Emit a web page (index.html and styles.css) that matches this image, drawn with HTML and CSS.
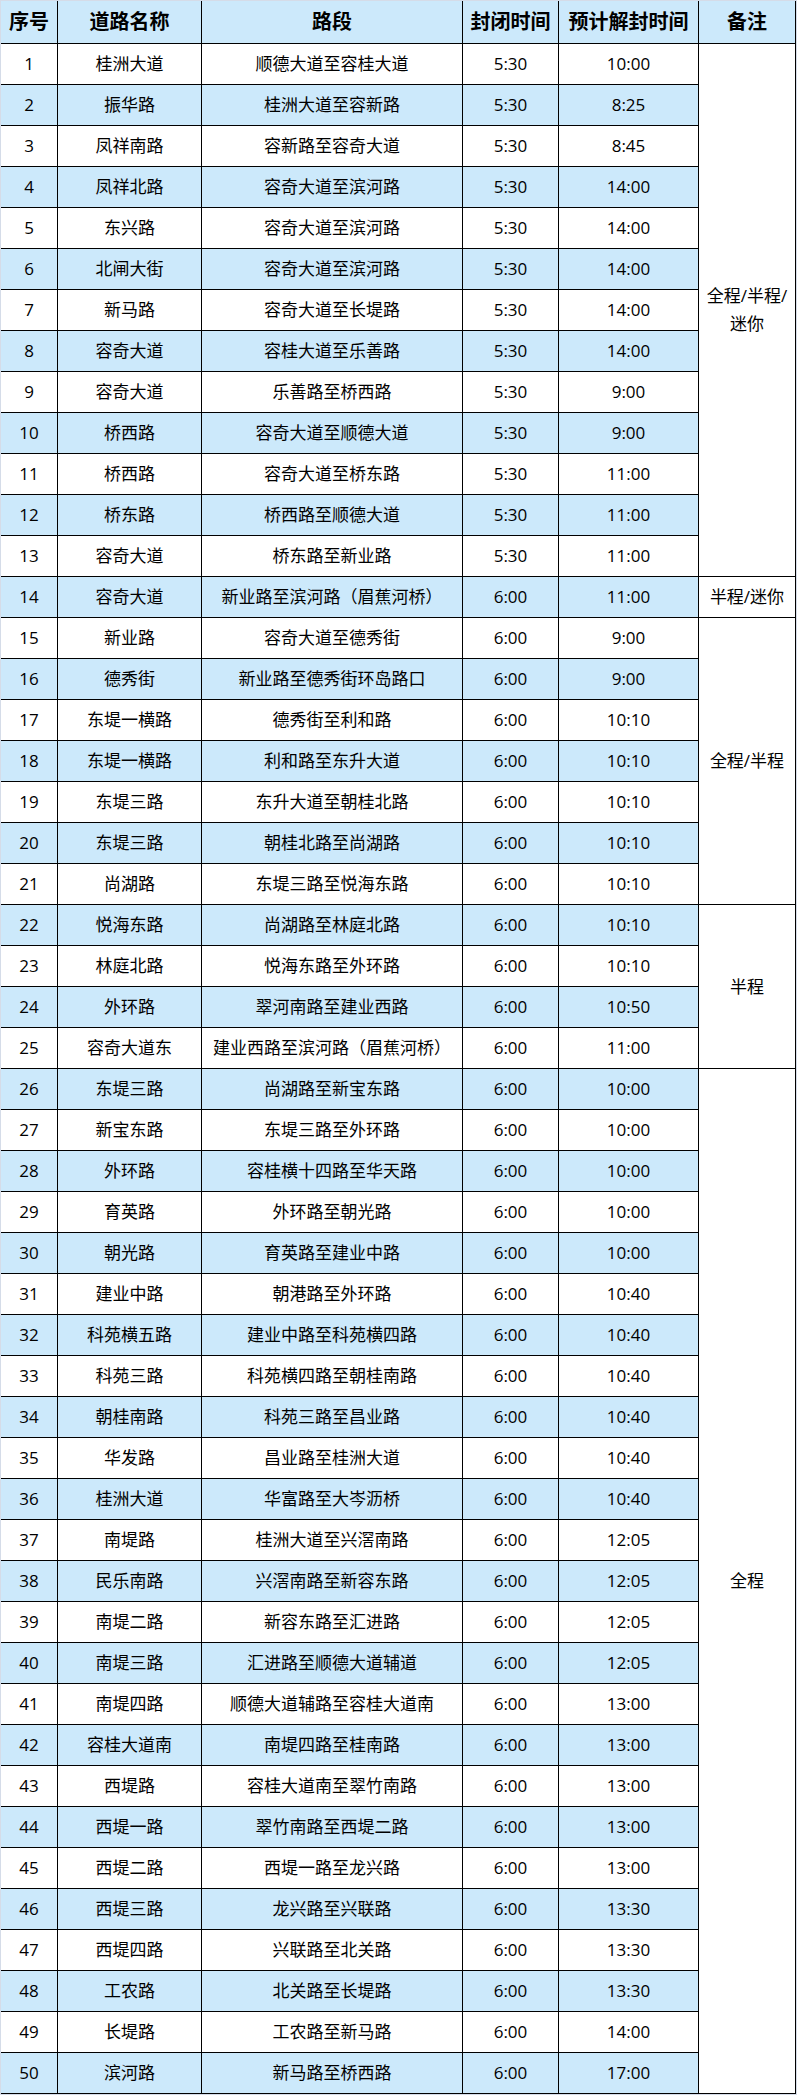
FILE: index.html
```html
<!DOCTYPE html>
<html lang="zh-CN">
<head>
<meta charset="utf-8">
<title>封闭道路</title>
<link rel="stylesheet" href="styles.css">
</head>
<body>
<div class="wrap">
<table class="roads">
<colgroup>
<col class="c-no"><col class="c-name"><col class="c-seg"><col class="c-close"><col class="c-open"><col class="c-note">
</colgroup>
<thead>
<tr class="head"><th>序号</th><th>道路名称</th><th>路段</th><th>封闭时间</th><th>预计解封时间</th><th>备注</th></tr>
</thead>
<tbody>
<tr><td>1</td><td>桂洲大道</td><td>顺德大道至容桂大道</td><td>5:30</td><td>10:00</td><td class="note" rowspan="13">全程/半程/<br>迷你</td></tr>
<tr class="alt"><td>2</td><td>振华路</td><td>桂洲大道至容新路</td><td>5:30</td><td>8:25</td></tr>
<tr><td>3</td><td>凤祥南路</td><td>容新路至容奇大道</td><td>5:30</td><td>8:45</td></tr>
<tr class="alt"><td>4</td><td>凤祥北路</td><td>容奇大道至滨河路</td><td>5:30</td><td>14:00</td></tr>
<tr><td>5</td><td>东兴路</td><td>容奇大道至滨河路</td><td>5:30</td><td>14:00</td></tr>
<tr class="alt"><td>6</td><td>北闸大街</td><td>容奇大道至滨河路</td><td>5:30</td><td>14:00</td></tr>
<tr><td>7</td><td>新马路</td><td>容奇大道至长堤路</td><td>5:30</td><td>14:00</td></tr>
<tr class="alt"><td>8</td><td>容奇大道</td><td>容桂大道至乐善路</td><td>5:30</td><td>14:00</td></tr>
<tr><td>9</td><td>容奇大道</td><td>乐善路至桥西路</td><td>5:30</td><td>9:00</td></tr>
<tr class="alt"><td>10</td><td>桥西路</td><td>容奇大道至顺德大道</td><td>5:30</td><td>9:00</td></tr>
<tr><td>11</td><td>桥西路</td><td>容奇大道至桥东路</td><td>5:30</td><td>11:00</td></tr>
<tr class="alt"><td>12</td><td>桥东路</td><td>桥西路至顺德大道</td><td>5:30</td><td>11:00</td></tr>
<tr><td>13</td><td>容奇大道</td><td>桥东路至新业路</td><td>5:30</td><td>11:00</td></tr>
<tr class="alt"><td>14</td><td>容奇大道</td><td>新业路至滨河路（眉蕉河桥）</td><td>6:00</td><td>11:00</td><td class="note">半程/迷你</td></tr>
<tr><td>15</td><td>新业路</td><td>容奇大道至德秀街</td><td>6:00</td><td>9:00</td><td class="note" rowspan="7">全程/半程</td></tr>
<tr class="alt"><td>16</td><td>德秀街</td><td>新业路至德秀街环岛路口</td><td>6:00</td><td>9:00</td></tr>
<tr><td>17</td><td>东堤一横路</td><td>德秀街至利和路</td><td>6:00</td><td>10:10</td></tr>
<tr class="alt"><td>18</td><td>东堤一横路</td><td>利和路至东升大道</td><td>6:00</td><td>10:10</td></tr>
<tr><td>19</td><td>东堤三路</td><td>东升大道至朝桂北路</td><td>6:00</td><td>10:10</td></tr>
<tr class="alt"><td>20</td><td>东堤三路</td><td>朝桂北路至尚湖路</td><td>6:00</td><td>10:10</td></tr>
<tr><td>21</td><td>尚湖路</td><td>东堤三路至悦海东路</td><td>6:00</td><td>10:10</td></tr>
<tr class="alt"><td>22</td><td>悦海东路</td><td>尚湖路至林庭北路</td><td>6:00</td><td>10:10</td><td class="note" rowspan="4">半程</td></tr>
<tr><td>23</td><td>林庭北路</td><td>悦海东路至外环路</td><td>6:00</td><td>10:10</td></tr>
<tr class="alt"><td>24</td><td>外环路</td><td>翠河南路至建业西路</td><td>6:00</td><td>10:50</td></tr>
<tr><td>25</td><td>容奇大道东</td><td>建业西路至滨河路（眉蕉河桥）</td><td>6:00</td><td>11:00</td></tr>
<tr class="alt"><td>26</td><td>东堤三路</td><td>尚湖路至新宝东路</td><td>6:00</td><td>10:00</td><td class="note" rowspan="25">全程</td></tr>
<tr><td>27</td><td>新宝东路</td><td>东堤三路至外环路</td><td>6:00</td><td>10:00</td></tr>
<tr class="alt"><td>28</td><td>外环路</td><td>容桂横十四路至华天路</td><td>6:00</td><td>10:00</td></tr>
<tr><td>29</td><td>育英路</td><td>外环路至朝光路</td><td>6:00</td><td>10:00</td></tr>
<tr class="alt"><td>30</td><td>朝光路</td><td>育英路至建业中路</td><td>6:00</td><td>10:00</td></tr>
<tr><td>31</td><td>建业中路</td><td>朝港路至外环路</td><td>6:00</td><td>10:40</td></tr>
<tr class="alt"><td>32</td><td>科苑横五路</td><td>建业中路至科苑横四路</td><td>6:00</td><td>10:40</td></tr>
<tr><td>33</td><td>科苑三路</td><td>科苑横四路至朝桂南路</td><td>6:00</td><td>10:40</td></tr>
<tr class="alt"><td>34</td><td>朝桂南路</td><td>科苑三路至昌业路</td><td>6:00</td><td>10:40</td></tr>
<tr><td>35</td><td>华发路</td><td>昌业路至桂洲大道</td><td>6:00</td><td>10:40</td></tr>
<tr class="alt"><td>36</td><td>桂洲大道</td><td>华富路至大岑沥桥</td><td>6:00</td><td>10:40</td></tr>
<tr><td>37</td><td>南堤路</td><td>桂洲大道至兴滘南路</td><td>6:00</td><td>12:05</td></tr>
<tr class="alt"><td>38</td><td>民乐南路</td><td>兴滘南路至新容东路</td><td>6:00</td><td>12:05</td></tr>
<tr><td>39</td><td>南堤二路</td><td>新容东路至汇进路</td><td>6:00</td><td>12:05</td></tr>
<tr class="alt"><td>40</td><td>南堤三路</td><td>汇进路至顺德大道辅道</td><td>6:00</td><td>12:05</td></tr>
<tr><td>41</td><td>南堤四路</td><td>顺德大道辅路至容桂大道南</td><td>6:00</td><td>13:00</td></tr>
<tr class="alt"><td>42</td><td>容桂大道南</td><td>南堤四路至桂南路</td><td>6:00</td><td>13:00</td></tr>
<tr><td>43</td><td>西堤路</td><td>容桂大道南至翠竹南路</td><td>6:00</td><td>13:00</td></tr>
<tr class="alt"><td>44</td><td>西堤一路</td><td>翠竹南路至西堤二路</td><td>6:00</td><td>13:00</td></tr>
<tr><td>45</td><td>西堤二路</td><td>西堤一路至龙兴路</td><td>6:00</td><td>13:00</td></tr>
<tr class="alt"><td>46</td><td>西堤三路</td><td>龙兴路至兴联路</td><td>6:00</td><td>13:30</td></tr>
<tr><td>47</td><td>西堤四路</td><td>兴联路至北关路</td><td>6:00</td><td>13:30</td></tr>
<tr class="alt"><td>48</td><td>工农路</td><td>北关路至长堤路</td><td>6:00</td><td>13:30</td></tr>
<tr><td>49</td><td>长堤路</td><td>工农路至新马路</td><td>6:00</td><td>14:00</td></tr>
<tr class="alt"><td>50</td><td>滨河路</td><td>新马路至桥西路</td><td>6:00</td><td>17:00</td></tr>
</tbody>
</table>
</div>
</body>
</html>
```
FILE: styles.css
```css
html, body {
  margin: 0;
  padding: 0;
  background: #d5dce8;
}
.wrap {
  padding: 1px 0 0 1px;
}
.roads {
  border-collapse: separate;
  border-spacing: 0;
  table-layout: fixed;
  width: 795px;
  background: #ffffff;
  font-family: "Open Sans", "Noto Sans CJK SC", sans-serif;
  font-size: 17px;
  color: #000;
}
.c-no { width: 57px; }
.c-name { width: 144px; }
.c-seg { width: 261px; }
.c-close { width: 96px; }
.c-open { width: 140px; }
.c-note { width: 97px; }
.roads th,
.roads td {
  padding: 0;
  text-align: center;
  vertical-align: middle;
  border-right: 1px solid #000;
  border-bottom: 1px solid #000;
  white-space: nowrap;
  line-height: 28px;
}
.roads th {
  font-weight: bold;
  font-size: 20px;
  background: #cce9fb;
}
.roads tr.head {
  height: 43px;
}
.roads tbody tr {
  height: 41px;
}
.roads tr.alt td {
  background: #cce9fb;
}
.roads td.note,
.roads tr.alt td.note {
  background: #ffffff;
}
```
